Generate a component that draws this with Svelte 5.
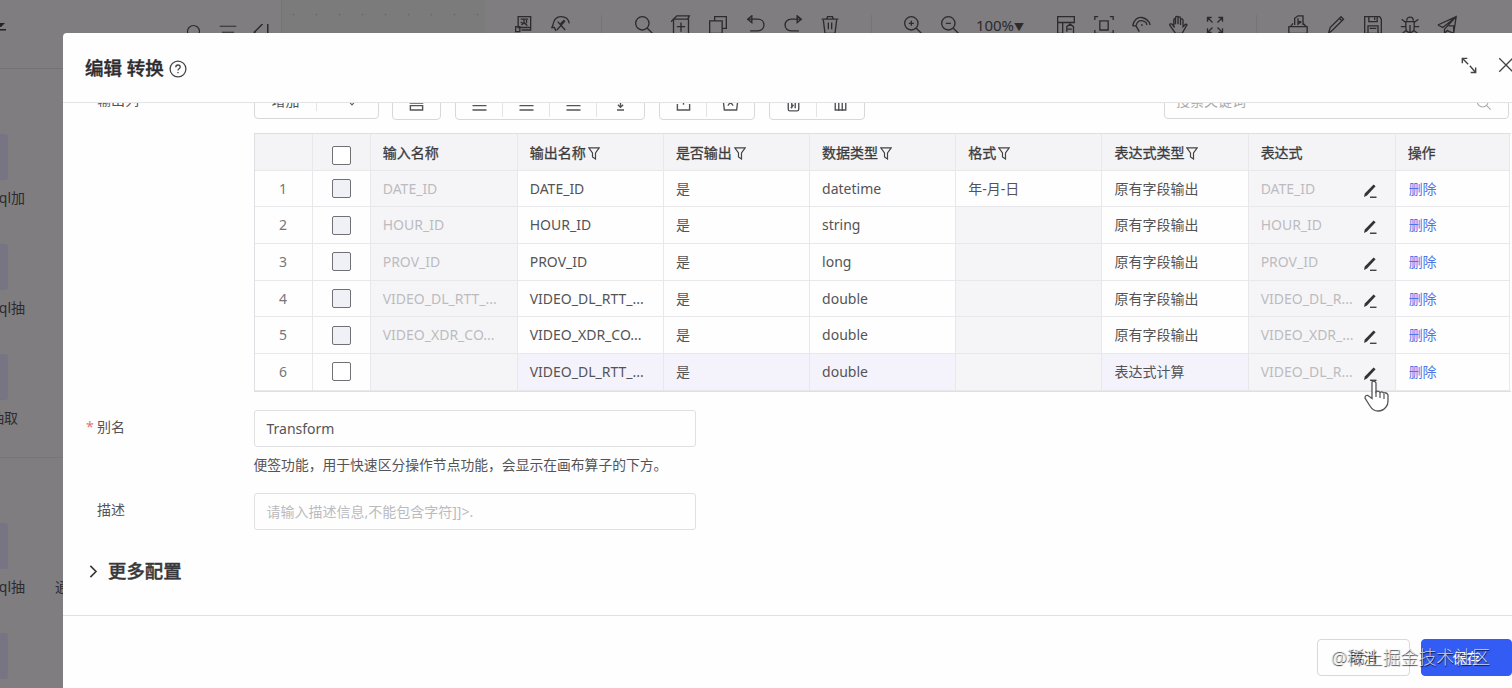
<script>
  const icons = {
    model: 'M5 2h15v13H5zM8 5h9M8 9h2M12 5v6M9 12l3-3 4 4M15 6v4M2 14h5v6H2zM9 18h11v-3',
    run: 'M2 13c1-7 5-11 10-11s9 3 10 8M2 13l-1 2h3l2 4M8 8l9 10M17 7L7 18M11 11l5-5',
    search: 'M10 2a8 8 0 1 0 0 16 8 8 0 1 0 0-16M16 16l6 6',
    addBox: 'M3 5h18v18H3zM3 5l4-4h15l-2 4M12 9v11M7 14h10M0 8l3-3',
    copy: 'M8 7V2h14v14h-5M2 7h15v15H2z',
    undo: 'M2 5h12c10 0 10 14 0 14H5M7 1L2 5l5 4z',
    redo: 'M22 5H10c-10 0-10 14 0 14h9M17 1l5 4-5 4z',
    trash: 'M2 5h20M8 5l1-3h6l1 3M4 6l2 16h12l2-16M10 9v8M14 9v8',
    zoomIn: 'M10 2a8 8 0 1 0 0 16 8 8 0 1 0 0-16M16 16l6 6M10 7v6M7 10h6',
    zoomOut: 'M10 2a8 8 0 1 0 0 16 8 8 0 1 0 0-16M16 16l6 6M7 10h6',
    layout: 'M2 2h20v7H2zM2 9v13h7M8 9v13M13 20v-6l4-3 4 3v8M14 17h5',
    fit: 'M1 6V2h4M19 2h4v4M1 18v4h4M19 22h4v-4M7 7h10v11H7z',
    eye: 'M2 13C3 6 8 2 13 3s9 5 10 9M2 13h4c1-5 4-7 8-6s5 3 5 5M12 12h2M6 13l4 7',
    hand: 'M7 13V6q0-2 2-2v7M9 4q0-3 3-2v9M12 3q3-2 3 1v8M15 5q3-1 3 2v7l3-3q3 0 1 2l-5 9H9l-7-10q0-2 3-1l3 4',
    expand: 'M3 8V3h5M3 3l6 6M16 3h5v5M21 3l-6 6M3 16v5h5M3 21l6-6M16 21h5v-5M21 21l-6-6',
    publish: 'M1 14h22v8H1zM3 14l3-4M18 10l4 4M8 12V4l4-3h6v11M12 4v7l4-3M12 8h4',
    pencil: 'M3 22l2-7L18 2l3 3L8 18zM16 4l3 3',
    save: 'M2 2h18l2 3v17H2zM7 2v6h10V2M6 22v-9h12v9M8 16h8M14 3v3',
    bug: 'M7 8h10v7c0 8-10 8-10 0zM8 7c0-6 8-6 8 0M12 12v9M2 5l5 4M22 5l-5 4M1 14h6M23 14h-6M3 22l5-4M21 22l-5-4',
    send: 'M1 12L23 2l-3 20-7-3M1 12l6 3L22 3 9 17v5l4-4M14 13h6v7',
  };

  const toolGroups = [
    ['model', 'run'],
    ['search', 'addBox', 'copy', 'undo', 'redo', 'trash'],
    ['zoomIn', 'zoomOut', '100%', 'layout', 'fit', 'eye', 'hand', 'expand'],
    ['publish', 'pencil', 'save', 'bug', 'send'],
  ];

  const lines = 'M4 4h16M4 11h16M4 16h16';
  const tableTools = [
    ['M5 11h14v5H5zM5 4h14v4H5z'],
    [lines, lines, lines, 'M12 3v9M9 10l3 3 3-3M8 16h8'],
    ['M5 9v7h14V9M12 2v8', 'M4 8l1 8h14l1-8M9 11l3-4 3 4'],
    ['M6 5h12v10q0 2-2 2H8q-2 0-2-2zM10 8v6M14 8v6M9 14l3-4', 'M4 6h16M6 6v10h12V6M10 8v9M14 8v9'],
  ];

  const columns = [
    { title: '输入名称' },
    { title: '输出名称', filter: true },
    { title: '是否输出', filter: true },
    { title: '数据类型', filter: true },
    { title: '格式', filter: true },
    { title: '表达式类型', filter: true },
    { title: '表达式' },
    { title: '操作' },
  ];

  const rows = [
    { input: 'DATE_ID', output: 'DATE_ID', type: 'datetime', format: '年-月-日', kind: '原有字段输出', expr: 'DATE_ID' },
    { input: 'HOUR_ID', output: 'HOUR_ID', type: 'string', kind: '原有字段输出', expr: 'HOUR_ID' },
    { input: 'PROV_ID', output: 'PROV_ID', type: 'long', kind: '原有字段输出', expr: 'PROV_ID' },
    { input: 'VIDEO_DL_RTT_...', output: 'VIDEO_DL_RTT_...', type: 'double', kind: '原有字段输出', expr: 'VIDEO_DL_R...' },
    { input: 'VIDEO_XDR_CO...', output: 'VIDEO_XDR_CO...', type: 'double', kind: '原有字段输出', expr: 'VIDEO_XDR_...' },
    { input: '', output: 'VIDEO_DL_RTT_...', type: 'double', kind: '表达式计算', expr: 'VIDEO_DL_R...', active: true },
  ];
</script>

{#snippet icon(d, size = 20, width = 1.6)}
  <svg width={size} height={size} viewBox="0 0 24 24" fill="none" stroke="currentColor" stroke-width={width}>
    <path {d} />
  </svg>
{/snippet}

<div class="app">
  <aside class="palette">
    <div class="palette-head">
      <svg class="tab" width="7" height="12" viewBox="0 0 7 12">
        <path d="M0 2h5L1 6H0zM0 8h6v1.500H0z" fill="#222" />
      </svg>
      <div class="palette-icons">
        {@render icon(icons.search, 18)}
        {@render icon('M1 3h22M4 11h16', 18)}
        {@render icon('M14 0L3 11l11 10M21 0v20', 18, 2)}
      </div>
    </div>
    <div class="nodes first">
      <div class="node"><i></i><span>ql加</span></div>
      <div class="node"><i></i><span>ql抽</span></div>
      <div class="node"><i></i><span class="short">抽取</span></div>
    </div>
    <div class="nodes">
      <div class="node"><i></i><span>ql抽</span><b>通</b></div>
      <div class="node"><i></i></div>
    </div>
  </aside>
  <div class="canvas"></div>
  <div class="topbar">
    {#each toolGroups as group}
      <div class="tool-group">
        {#each group as name}
          {#if name === '100%'}
            <span class="zoom">100%<small>▼</small></span>
          {:else}
            <span class="tool">{@render icon(icons[name])}</span>
          {/if}
        {/each}
      </div>
    {/each}
  </div>
</div>

<div class="modal">
  <header>
    <h2>编辑 转换</h2>
    <svg class="help" width="18" height="18" viewBox="0 0 18 18" fill="none" stroke="#444" stroke-width="1.3">
      <circle cx="9" cy="9" r="7.9" />
      <path d="M6.8 7.2q0-2.2 2.2-2.2t2.2 2q0 1-1.2 1.7-1 .6-1 1.7M9 12v1.3" />
    </svg>
    <div class="window-actions">
      {@render icon('M4 10V4h6M4 4l7 7M20 15v6h-6M20 21l-7-8', 20, 1.7)}
      {@render icon('M3 3l18 18M21 3L3 21', 18, 1.7)}
    </div>
  </header>

  <main>
    <div class="field list-field">
      <div class="label">输出列</div>
      <div class="control">
        <div class="tools">
          <div class="btn-group add">
            <span>增加</span>
            <span>{@render icon('M7 9l5 6 5-6', 16)}</span>
          </div>
          {#each tableTools as group}
            <div class="btn-group">
              {#each group as d}
                <span>{@render icon(d, 21, 1.6)}</span>
              {/each}
            </div>
          {/each}
          <div class="search-box">
            <span>搜索关键词</span>
            {@render icon(icons.search, 16)}
          </div>
        </div>

        <div class="table">
          <div class="tr th">
            <div class="td"></div>
            <div class="td center"><i class="check"></i></div>
            {#each columns as col}
              <div class="td">
                {col.title}
                {#if col.filter}
                  <svg class="filter" width="12" height="13" viewBox="0 0 12 13" fill="none" stroke="#444" stroke-width="1.2">
                    <path d="M.8.8h10.4L7.5 6v6L4.5 10V6z" />
                  </svg>
                {/if}
              </div>
            {/each}
          </div>
          {#each rows as row, i}
            <div class="tr" class:active={row.active}>
              <div class="td num">{i + 1}</div>
              <div class="td center"><i class="check" class:locked={!row.active}></i></div>
              <div class="td disabled">{row.input}</div>
              <div class="td hl">{row.output}</div>
              <div class="td hl">是</div>
              <div class="td hl">{row.type}</div>
              <div class="td" class:disabled={!row.format}>{row.format ?? ''}</div>
              <div class="td hl">{row.kind}</div>
              <div class="td disabled expr">
                <span>{row.expr}</span>
                <svg width="16" height="16" viewBox="0 0 16 16">
                  <path d="M2 14l.8-3.5L11.6 1.4l2 1.8L5 12.4z" fill="#333" />
                  <path d="M8 14.3h6.500" stroke="#444" stroke-width="1.4" />
                </svg>
              </div>
              <div class="td link">删除</div>
            </div>
          {/each}
        </div>
      </div>
    </div>

    <div class="field alias">
      <div class="label"><em>*</em>别名</div>
      <div class="control">
        <div class="input">Transform</div>
        <p>便签功能，用于快速区分操作节点功能，会显示在画布算子的下方。</p>
      </div>
    </div>

    <div class="field">
      <div class="label">描述</div>
      <div class="control">
        <div class="input placeholder">请输入描述信息,不能包含字符]]&gt;.</div>
      </div>
    </div>

    <div class="more">
      {@render icon('M7 3l9 9-9 9', 15, 2.6)}
      <h3>更多配置</h3>
    </div>
  </main>

  <footer>
    <div class="btn">取消</div>
    <div class="btn primary">保存</div>
  </footer>
</div>

<svg class="cursor" width="28" height="34" viewBox="0 0 28 34">
  <path
    d="M9 3q2.500-2 4 1v9q2-2 4 .5 2-1.500 3.500.5 3.500-1 4.500 2v6q0 4-2 6-3 4-8 4-5 0-8-5l-5-8q0-3 3-2.500l4 3z"
    fill="#fff"
    stroke="#555"
    stroke-width="1.300"
  />
  <path d="M13 12v6M17 14v5M21 15v5" stroke="#555" stroke-width="1.200" />
</svg>
<div class="watermark">@稀土掘金技术社区</div>

<style>
  :global(body) {
    overflow: hidden;
    font-family: 'Noto Sans', 'Noto Sans CJK SC', sans-serif;
    font-size: 14px;
    line-height: 20px;
    color: #545457;
  }

  svg {
    display: block;
    flex: none;
  }

  .app {
    display: flex;
    height: 688px;
    background: #7f7d80;
    color: #2c2b2e;
  }

  .palette {
    box-sizing: border-box;
    width: 282px;
    border-right: 1px solid #747375;
  }

  .palette-head {
    display: flex;
    box-sizing: border-box;
    height: 69px;
    padding: 21px 12px 0 0;
    border-bottom: 1px solid #737274;
  }

  .palette-icons {
    display: flex;
    gap: 15px;
    margin: 3px -1px 0 auto;
  }

  .nodes {
    display: flex;
    flex-direction: column;
    gap: 30px;
    padding-top: 65px;
  }

  .nodes.first {
    height: 323px;
    border-bottom: 1px solid #767578;
  }

  .node {
    display: flex;
    flex-wrap: wrap;
    align-content: flex-start;
    height: 80px;
  }

  .node i {
    width: 8px;
    height: 46px;
    margin-right: 260px;
    background: #777583;
    border-radius: 0 3px 3px 0;
  }

  .node span {
    display: flex;
    justify-content: flex-end;
    width: 25px;
    margin-top: 8px;
    white-space: nowrap;
    overflow: hidden;
  }

  .node .short {
    width: 18px;
  }

  .node b {
    margin: 8px 0 0 30px;
    font-weight: 400;
  }

  .canvas {
    width: 203px;
    background: radial-gradient(circle, #6e6e6e 0.800px, transparent 1.300px) 0 3px / 23px 23px #7a7b7a;
  }

  .topbar {
    display: flex;
    flex: 1;
    height: 50px;
    padding-left: 20px;
    white-space: nowrap;
  }

  .tool-group {
    display: flex;
    align-items: center;
  }

  .tool-group + .tool-group {
    margin-left: 22px;
    padding-left: 24px;
    background: linear-gradient(#747375, #747375) 0 50% / 1px 20px no-repeat;
  }

  .tool {
    display: flex;
    justify-content: center;
    width: 37.200px;
  }

  .zoom {
    width: 62px;
    margin: 2px 10px 0 7px;
    font-size: 15px;
  }

  .zoom small {
    font-size: 10px;
  }

  .modal {
    position: absolute;
    top: 33px;
    left: 63px;
    display: flex;
    flex-direction: column;
    width: 1449px;
    height: 655px;
    background: #fefefe;
    border-radius: 4px 0 0;
    overflow: hidden;
  }

  header {
    display: flex;
    align-items: center;
    box-sizing: border-box;
    height: 70px;
    padding-left: 22px;
    border-bottom: 1px solid #e4e4e6;
  }

  h2 {
    margin: 0;
    font-size: 18.500px;
    font-weight: 500;
    color: #2c2c30;
    -webkit-text-stroke: 0.400px;
  }

  .help {
    margin: 2px 0 0 5px;
  }

  .window-actions {
    display: flex;
    align-items: center;
    gap: 18px;
    margin: -5px -3px 0 auto;
    color: #444;
  }

  main {
    height: 512px;
    overflow: hidden;
  }

  .field {
    display: flex;
    height: 37px;
    margin-bottom: 42px;
  }

  .list-field {
    height: 309px;
    margin: -20px 0 18px;
  }

  .alias {
    height: 65px;
    margin-bottom: 18px;
  }

  .label {
    box-sizing: border-box;
    width: 190.500px;
    padding: 7px 0 0 34px;
  }

  .label em {
    display: inline-block;
    width: 11px;
    margin-left: -11px;
    font-style: normal;
    color: #e27575;
  }

  .control {
    flex: 1;
  }

  .tools {
    display: flex;
    gap: 13.800px;
    height: 37px;
    margin-bottom: 13px;
  }

  .btn-group {
    display: flex;
    align-items: center;
    box-sizing: border-box;
    border: 1px solid #d8d8dc;
    border-radius: 4px;
  }

  .btn-group span {
    display: flex;
    justify-content: center;
    width: 47px;
  }

  .btn-group span svg {
    margin-top: 9px;
  }

  .btn-group span + span {
    border-left: 1px solid #e4e4e7;
    margin-left: -1px;
  }

  .btn-group.add {
    height: 36px;
  }

  .btn-group.add span {
    width: 62px;
  }

  .btn-group.add span + span {
    box-sizing: border-box;
    padding-left: 10px;
  }

  .btn-group.add svg {
    margin-top: 3px;
  }

  .search-box {
    display: flex;
    align-items: center;
    justify-content: space-between;
    box-sizing: border-box;
    width: 345px;
    height: 36px;
    margin: 0 3px 0 auto;
    padding: 0 16px 0 11px;
    border: 1px solid #d8d8dc;
    border-radius: 4px;
    color: #aaa;
  }

  .search-box svg {
    margin-top: 3px;
  }

  .table {
    width: 1256px;
    border: solid #dfdfe3;
    border-width: 1px 0 1px 1px;
  }

  .tr {
    display: grid;
    grid-template-columns: 58.200px 58px 147px repeat(5, 146.200px) 147px 114.500px;
    height: 36.700px;
    background: #fefefe;
  }

  .td {
    display: flex;
    align-items: center;
    box-sizing: border-box;
    padding-left: 12px;
    border: solid #e8e8eb;
    border-width: 0 1px 1px 0;
    white-space: nowrap;
  }

  .th .td {
    background: #f4f4f6;
    color: #3c3c3f;
    padding-top: 3px;
    -webkit-text-stroke: 0.300px;
  }

  .td.center,
  .td.num {
    justify-content: center;
    padding-left: 0;
  }

  .td.num {
    color: #77777a;
  }

  .th .td.center {
    padding-top: 7px;
  }

  .check {
    box-sizing: border-box;
    width: 19px;
    height: 19px;
    border: 1.500px solid #707075;
    border-radius: 2px;
    background: #fff;
  }

  .check.locked {
    background: #f0f0f7;
  }

  .filter {
    margin-left: 2px;
  }

  .td.disabled {
    background: #f5f5f7;
    color: #bcbcc0;
  }

  .active .hl {
    background: #f4f2fa;
  }

  .expr {
    justify-content: space-between;
    padding-right: 17px;
  }

  .expr svg {
    margin-top: 4px;
  }

  .td.link {
    padding-left: 13px;
    color: #4f75ea;
  }

  .input {
    display: flex;
    align-items: center;
    box-sizing: border-box;
    width: 442px;
    height: 37px;
    padding-left: 12px;
    border: 1px solid #e0e0e3;
    border-radius: 3px;
  }

  .placeholder {
    color: #bbbbbf;
  }

  p {
    margin: 8px 0 0;
    font-size: 13.800px;
  }

  .more {
    display: flex;
    align-items: center;
    gap: 7px;
    margin: -11px 0 0 23px;
    color: #38383a;
  }

  h3 {
    margin: 0;
    font-size: 18.400px;
    font-weight: 500;
    -webkit-text-stroke: 0.400px;
  }

  footer {
    display: flex;
    justify-content: flex-end;
    gap: 11px;
    flex: 1;
    padding-top: 23px;
    border-top: 1px solid #e0e0e3;
  }

  .btn {
    display: flex;
    align-items: center;
    justify-content: center;
    box-sizing: border-box;
    width: 93px;
    height: 37px;
    border: 1px solid #d8d8dc;
    border-radius: 4px;
  }

  .btn.primary {
    width: 91px;
    background: #335cf5;
    border-color: #335cf5;
    color: #fff;
  }

  .cursor {
    position: absolute;
    top: 379px;
    left: 1363px;
  }

  .watermark {
    position: absolute;
    top: 646px;
    left: 1331px;
    font-size: 17.900px;
    font-weight: 300;
    line-height: 22px;
    color: rgba(255, 255, 255, 0.750);
    text-shadow: 0.500px 0.500px 1px rgba(0, 0, 0, 0.850);
    white-space: nowrap;
  }
</style>
